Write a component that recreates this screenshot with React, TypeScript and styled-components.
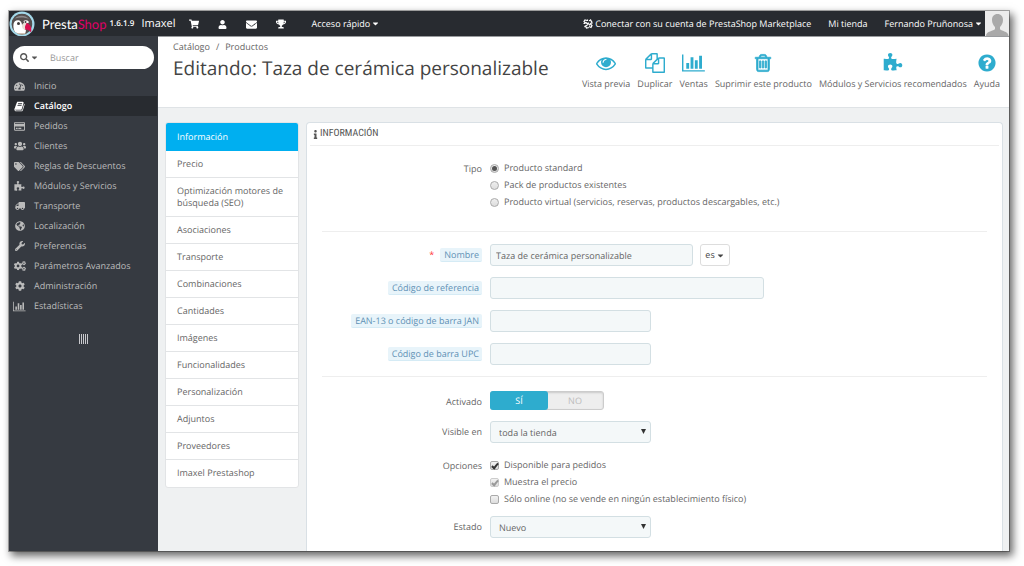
import React from "react";
import styled, { createGlobalStyle, css } from "styled-components";
import {
  FaCaretDown,
  FaCog,
  FaCogs,
  FaEnvelope,
  FaGlobeAmericas,
  FaInfo,
  FaRegCreditCard,
  FaSearch,
  FaShoppingCart,
  FaTachometerAlt,
  FaTags,
  FaTrophy,
  FaTruck,
  FaUser,
  FaUsers,
  FaWrench,
} from "react-icons/fa";

const GlobalStyle = createGlobalStyle`
  *, *::before, *::after { box-sizing: border-box; }
  body {
    margin: 0;
    background: #fff;
    color: #666;
    font-family: "Open Sans", "Noto Sans", sans-serif;
    font-size: 9px;
    line-height: 12px;
    text-rendering: geometricPrecision;
  }
  button, input, select { font: inherit; color: inherit; text-rendering: inherit; }
  a { color: inherit; text-decoration: none; }
  ul { list-style: none; margin: 0; padding: 0; }
  svg { display: block; flex: none; }
`;

/* ---------- Icons ---------- */

const EyeIcon = ({ size = 20 }) => (
  <svg width={size} height={size} viewBox="0 0 1792 1792" fill="currentColor" aria-hidden="true">
    <path d="M1664 960q-152-236-381-353 61 104 61 225 0 185-131.5 316.5t-316.5 131.5-316.5-131.5-131.5-316.5q0-121 61-225-229 117-381 353 133 205 333.5 326.5t434.5 121.5 434.5-121.5 333.5-326.5zm-720-384q0-20-14-34t-34-14q-125 0-214.5 89.5t-89.5 214.5q0 20 14 34t34 14 34-14 14-34q0-86 61-147t147-61q20 0 34-14t14-34zm848 384q0 34-20 69-140 230-376.5 368.5t-499.5 138.5-499.5-139-376.5-368q-20-35-20-69t20-69q140-229 376.5-368t499.5-139 499.5 139 376.5 368q20 35 20 69z" />
  </svg>
);

const FilesIcon = ({ size = 20 }) => (
  <svg width={size} height={size} viewBox="0 0 1792 1792" fill="currentColor" aria-hidden="true">
    <path d="M1696 384q40 0 68 28t28 68v1216q0 40-28 68t-68 28h-960q-40 0-68-28t-28-68v-288h-544q-40 0-68-28t-28-68v-672q0-40 20-88t48-76l408-408q28-28 76-48t88-20h416q40 0 68 28t28 68v328q68-40 128-40h416zm-544 213l-299 299h299v-299zm-640-384l-299 299h299v-299zm196 647l316-316v-416h-384v416q0 40-28 68t-68 28h-416v640h512v-256q0-40 20-88t48-76zm956 804v-1152h-384v416q0 40-28 68t-68 28h-416v640h896z" />
  </svg>
);

const ChartIcon = ({ size = 20 }) => (
  <svg width={(size * 8) / 7} height={size} viewBox="0 0 2048 1792" fill="currentColor" aria-hidden="true">
    <path d="M640 896v512h-256v-512h256zm384-512v1024h-256v-1024h256zm1024 1152v128h-2048v-1536h128v1408h1920zm-640-896v768h-256v-768h256zm384-384v1152h-256v-1152h256z" />
  </svg>
);

const TrashIcon = ({ size = 20 }) => (
  <svg width={size} height={size} viewBox="0 0 1792 1792" fill="currentColor" aria-hidden="true">
    <path
      stroke="currentColor"
      strokeWidth="70"
      d="M704 736v576q0 14-9 23t-23 9h-64q-14 0-23-9t-9-23v-576q0-14 9-23t23-9h64q14 0 23 9t9 23zm256 0v576q0 14-9 23t-23 9h-64q-14 0-23-9t-9-23v-576q0-14 9-23t23-9h64q14 0 23 9t9 23zm256 0v576q0 14-9 23t-23 9h-64q-14 0-23-9t-9-23v-576q0-14 9-23t23-9h64q14 0 23 9t9 23zm128 724v-948h-896v948q0 22 7 40.5t14.5 27 10.5 8.5h832q3 0 10.5-8.5t14.5-27 7-40.5zm-672-1076h448l-48-117q-7-9-17-11h-317q-10 2-17 11zm928 32v64q0 14-9 23t-23 9h-96v948q0 83-47 143.5t-113 60.5h-832q-66 0-113-58.5t-47-141.5v-952h-96q-14 0-23-9t-9-23v-64q0-14 9-23t23-9h309l70-167q15-37 54-63t79-26h320q40 0 79 26t54 63l70 167h309q14 0 23 9t9 23z"
    />
  </svg>
);

const PuzzleIcon = ({ size = 20 }) => (
  <svg width={size} height={size} viewBox="0 0 1792 1792" fill="currentColor" aria-hidden="true">
    <path d="M1728 1098q0 81-44.5 135t-123.5 54q-41 0-77.5-17.5t-59-38-56.5-38-71-17.5q-110 0-110 124 0 39 16 115t15 115v5q-22 0-33 1-34 3-97.5 11.5t-115.5 13.5-98 5q-61 0-103-26.5t-42-83.5q0-37 17.5-71t38-56.5 38-59 17.5-77.5q0-79-54-123.5t-135-44.5q-84 0-143 45.5t-59 127.5q0 43 15 83t33.5 64.5 33.5 53 15 50.5q0 45-46 89-37 35-117 35-95 0-245-24-9-2-27.5-4t-27.5-4l-13-2q-1 0-3-1-2 0-2-1v-1024q2 1 17.5 3.5t34 5 21.5 3.5q150 24 245 24 80 0 117-35 46-44 46-89 0-22-15-50.5t-33.5-53-33.5-64.5-15-83q0-82 59-127.5t144-45.5q80 0 134 44.5t54 123.5q0 41-17.5 77.5t-38 59-38 56.5-17.5 71q0 57 42 83.5t103 26.5q64 0 180-15t163-17v2q-1 2-3.5 17.5t-5 34-3.5 21.5q-24 150-24 245 0 80 35 117 44 46 89 46 22 0 50.5-15t53-33.5 64.5-33.5 83-15q82 0 127.5 59t45.5 143z" />
  </svg>
);

const HelpIcon = ({ size = 20 }) => (
  <svg width={size} height={size} viewBox="0 0 1792 1792" fill="currentColor" aria-hidden="true">
    <path d="M1024 1376v-192q0-14-9-23t-23-9h-192q-14 0-23 9t-9 23v192q0 14 9 23t23 9h192q14 0 23-9t9-23zm256-672q0-88-55.5-163t-138.5-116-170-41q-243 0-371 213-15 24 8 42l132 100q7 6 19 6 16 0 25-12 53-68 86-92 34-24 86-24 48 0 85.5 26t37.5 59q0 38-20 61t-68 45q-63 28-115.5 86.5t-52.5 125.5v36q0 14 9 23t23 9h192q14 0 23-9t9-23q0-19 21.5-49.5t54.5-49.5q32-18 49-28.5t46-35 44.5-48 28-60.5 12.5-81zm384 192q0 209-103 385.5t-279.5 279.5-385.5 103-385.5-103-279.5-279.5-103-385.5 103-385.5 279.5-279.5 385.5-103 385.5 103 279.5 279.5 103 385.5z" />
  </svg>
);

const BookIcon = ({ size = 11 }) => (
  <svg width={size} height={size} viewBox="0 0 1792 1792" fill="currentColor" aria-hidden="true">
    <path d="M1703 478q40 57 18 129l-275 906q-19 64-76.5 107.5t-122.5 43.5h-923q-77 0-148.5-53.5t-99.5-131.5q-24-67-2-127 0-4 3-27t4-37q1-8-3-21.5t-3-19.5q2-11 8-21t16.5-23.5 16.5-23.5q23-38 45-91.5t30-91.5q3-10 .5-30t-.5-28q3-11 17-28t17-23q21-36 42-92t25-90q1-9-2.5-32t.5-28q4-13 22-30.5t22-22.5q19-26 42.5-84.5t27.5-96.5q1-8-3-25.5t-2-26.5q2-8 9-18t18-23 17-21q8-12 16.5-30.5t15-35 16-36 19.5-32 26.5-23.5 36-11.5 47.5 5.5l-1 3q38-9 51-9h761q74 0 114 56t18 130l-274 906q-36 119-71.5 153.5t-128.5 34.5h-869q-27 0-38 15-11 16-1 43 24 70 144 70h923q29 0 56-15.5t35-41.5l300-987q7-22 5-57 38 15 59 43zm-1064 2q-4 13 2 22.5t20 9.5h608q13 0 25.5-9.5t16.5-22.5l21-64q4-13-2-22.5t-20-9.5h-608q-13 0-25.5 9.5t-16.5 22.5zm-83 256q-4 13 2 22.5t20 9.5h608q13 0 25.5-9.5t16.5-22.5l21-64q4-13-2-22.5t-20-9.5h-608q-13 0-25.5 9.5t-16.5 22.5z" />
  </svg>
);

const LinkIcon = () => (
  <svg width="10" height="10" viewBox="0 0 20 20" fill="none" stroke="currentColor" strokeWidth="2.4" aria-hidden="true">
    <path d="M8 3 4 2 2 5l3 4M5 6l4 4 2-3M9 12l-4 2 2 4 5-1M12 3l5 1 1 4-4 1M14 9l4 4-2 4-4-2M11 9l3 4" />
    <path d="M1 9h3M9 1v3M16 1l-2 2M3 16l2-2" />
  </svg>
);

const PuffinLogo = () => (
  <svg width="26" height="26" viewBox="0 0 52 52" aria-hidden="true">
    <defs>
      <clipPath id="puffin-disc">
        <circle cx="26" cy="26" r="21" />
      </clipPath>
    </defs>
    <circle cx="26" cy="26" r="25" fill="#a4d9ea" />
    <g clipPath="url(#puffin-disc)">
      <path d="M4 28C5 12 14 4 27 5c13 1 19 10 20 21l-6 24H8z" fill="#55504f" />
      <path d="M12 15c6-7 20-8 28 1-9-4-19-4-28-1z" fill="#8d8b8c" />
      <path d="M9 26c1-6 6-9 12-7 4 2 5 6 5 10l8 10-2 8H14c-4-7-6-14-5-21z" fill="#fff" />
      <path d="M29 20c4-3 10-2 11 3l-9 3z" fill="#fff" />
      <path d="M14 45h22l2 7H12z" fill="#9b8166" />
    </g>
    <path d="M33 24c4-1 8 2 10 6 2 5 2 9 1 13-3-5-8-7-13-6z" fill="#d8104f" />
    <path d="M26 28c2-5 7-6 9-3-3 4-4 8-2 12-4 1-8-3-7-9z" fill="#e8e0d6" />
    <circle cx="19" cy="25" r="3" fill="#3d3a3a" />
    <circle cx="33" cy="22" r="2" fill="#3d3a3a" />
  </svg>
);

const AvatarPicture = () => (
  <svg width="24" height="25" viewBox="0 0 48 50" role="img" aria-label="Fernando Pruñonosa">
    <rect width="48" height="50" fill="#ececec" />
    <path
      d="M25 6c7 0 11 5 11 12 0 6-3 11-6 14v4c1 4 17 4 17 14H2c0-10 16-10 18-14v-4c-3-3-6-8-6-14 0-7 4-12 11-12z"
      fill="#a9a9a9"
    />
  </svg>
);

/* ---------- Frame ---------- */

const Page = styled.div`
  display: flex;
  min-height: 100vh;
  padding: 11px 15px 15px 9px;
`;

const Window = styled.div`
  display: flex;
  flex-direction: column;
  flex: 1;
  min-width: 0;
  background: #eff1f2;
  box-shadow: 0 0 0 1px rgba(0, 0, 0, 0.3), 3px 4px 8px 1px rgba(0, 0, 0, 0.6);
`;

const TopBar = styled.header`
  display: flex;
  align-items: center;
  height: 25px;
  background: #282b30;
  color: #fff;
`;

const Brand = styled.a`
  display: flex;
  align-items: center;
  height: 25px;
`;

const BrandName = styled.span`
  margin-left: 7px;
  font-family: Lato, "Open Sans", sans-serif;
  font-size: 13px;
  line-height: 16px;
  b {
    font-weight: 400;
    color: #df0067;
  }
`;

const Version = styled.span`
  margin-left: 3px;
  font-size: 8px;
  font-weight: 600;
`;

const ShopName = styled.a`
  margin-left: 7px;
  font-size: 11px;
  line-height: 16px;
`;

const QuickIcons = styled.nav`
  display: flex;
  align-items: center;
  gap: 19px;
  margin-left: 14px;
  a {
    display: flex;
    padding-top: 1px;
  }
`;

const BarButton = styled.button`
  display: flex;
  align-items: center;
  gap: 1px;
  padding: 0;
  border: 0;
  background: none;
  color: #fff;
  white-space: nowrap;
`;

const BarRight = styled.div`
  display: flex;
  align-items: center;
  gap: 17px;
  margin-left: auto;
  white-space: nowrap;
`;

const BarLink = styled.a`
  display: flex;
  align-items: center;
  gap: 2px;
`;

const UserBox = styled.div`
  display: flex;
  align-items: center;
  gap: 2px;
`;

const QuickMenu = styled.div`
  margin-left: 25px;
`;

const Body = styled.div`
  display: flex;
  flex: 1;
`;

/* ---------- Sidebar ---------- */

const Sidebar = styled.aside`
  flex: none;
  width: 149px;
  background: #363a41;
  color: #bbb;
`;

const SearchBox = styled.form`
  display: flex;
  align-items: center;
  height: 23px;
  margin: 10px 4px 7px;
  padding: 0 8px 0 7px;
  border-radius: 12px;
  background: #fff;
`;

const SearchScope = styled.button`
  display: flex;
  align-items: center;
  gap: 1px;
  padding: 0;
  border: 0;
  background: none;
  color: #555;
`;

const SearchInput = styled.input`
  flex: 1;
  min-width: 0;
  margin-left: 11px;
  padding: 0;
  border: 0;
  outline: 0;
  background: none;
  &::placeholder {
    color: #999;
    opacity: 1;
  }
`;

const MenuLink = styled.a<{ $active?: boolean }>`
  display: flex;
  align-items: center;
  height: 20px;
  ${(p) =>
    p.$active &&
    css`
      margin-right: 1px;
      background: #282b30;
      color: #fff;
      font-weight: 600;
    `}
`;

const MenuIcon = styled.span<{ $flip?: boolean }>`
  display: flex;
  justify-content: center;
  width: 21px;
  margin-right: 4px;
  svg {
    transform: ${(p) => (p.$flip ? "scaleX(-1)" : "none")};
  }
`;

const Collapse = styled.button`
  display: flex;
  gap: 1px;
  margin: 18px auto;
  padding: 0;
  border: 0;
  background: none;
  i {
    width: 1px;
    height: 10px;
    background: #c8c8cc;
  }
`;

/* ---------- Main ---------- */

const Main = styled.main`
  display: flex;
  flex-direction: column;
  flex: 1;
  min-width: 0;
`;

const PageHead = styled.div`
  display: flex;
  justify-content: space-between;
  height: 72px;
  padding: 5px 9px 0 15px;
  border-bottom: 1px solid #dfe3e6;
  border-top: 1px solid #999b9e;
  background: #fff;
`;

const Crumbs = styled.nav`
  display: flex;
  gap: 6px;
  line-height: 10px;
`;

const Title = styled.h1`
  margin: 4px 0 0;
  color: #444;
  font-size: 19px;
  font-weight: 400;
  line-height: 24px;
  white-space: nowrap;
`;

const Toolbar = styled.ul`
  display: flex;
  gap: 7px;
  padding-top: 11px;
`;

const ToolLink = styled.a`
  display: flex;
  flex-direction: column;
  align-items: center;
  gap: 5px;
  white-space: nowrap;
  svg {
    color: #2eacce;
  }
`;

const Columns = styled.div`
  display: flex;
  flex: 1;
  gap: 7px;
  padding: 14px 6px 0 7px;
`;

const Tabs = styled.ul`
  align-self: flex-start;
  flex: none;
  width: 134px;
  border: 1px solid #e2e4e6;
  border-radius: 3px;
  overflow: hidden;
  background: #fff;
`;

const TabLink = styled.a<{ $active?: boolean }>`
  display: block;
  padding: 7px 11px;
  border-bottom: 1px solid #e2e4e6;
  li:last-child > & {
    border-bottom: 0;
    padding-bottom: 8px;
  }
  ${(p) =>
    p.$active &&
    css`
      padding-top: 8px;
      border-color: #00aff0;
      background: #00aff0;
      color: #fff;
    `}
`;

const Panel = styled.form`
  flex: 1;
  min-width: 0;
  padding: 0 3px;
  border: 1px solid #d9e0e5;
  border-bottom: 0;
  border-radius: 4px 4px 0 0;
  background: #fff;
`;

const PanelTitle = styled.h2`
  display: flex;
  align-items: center;
  height: 23px;
  margin: 0;
  padding-left: 1px;
  border-bottom: 1px solid #eee;
  color: #555;
  font-family: "Roboto Condensed", Roboto, "Open Sans", sans-serif;
  font-size: 10px;
  font-weight: 400;
  text-transform: uppercase;
`;

const Section = styled.section<{ $top?: number; $bottom?: number }>`
  margin: 0 12px;
  padding: ${(p) => p.$top ?? 12}px 0 ${(p) => p.$bottom ?? 11}px;
  &:not(:last-child) {
    border-bottom: 1px solid #eee;
  }
`;

const Row = styled.div<{ $gap?: number }>`
  display: grid;
  grid-template-columns: minmax(100px, 160px) 1fr;
  column-gap: 8px;
  &:not(:first-child) {
    margin-top: ${(p) => p.$gap ?? 11}px;
  }
`;

const LabelCell = styled.div<{ $top?: number }>`
  display: flex;
  justify-content: flex-end;
  align-items: flex-start;
  gap: 6px;
  padding-top: ${(p) => p.$top ?? 4}px;
  line-height: 13px;
  white-space: nowrap;
`;

const HintLabel = styled.label`
  padding: 0 3px 0 4px;
  border-bottom: 1px solid #d5ebf5;
  border-radius: 2px;
  background: #e8f4fa;
  color: #5f91b5;
`;

const Required = styled.span`
  color: #f33;
`;

const Controls = styled.div`
  display: flex;
  align-items: flex-start;
  gap: 7px;
`;

const fieldBox = css`
  height: 22px;
  max-width: 100%;
  border: 1px solid #d3dfe3;
  border-radius: 3px;
  background: #f4f8f9;
  color: #666;
`;

const TextField = styled.input<{ $width: number }>`
  ${fieldBox}
  width: ${(p) => p.$width}px;
  padding: 0 5px;
`;

const SelectWrap = styled.div`
  position: relative;
  width: 161px;
  svg {
    position: absolute;
    top: 8px;
    right: 5px;
    pointer-events: none;
  }
`;

const SelectField = styled.select`
  ${fieldBox}
  display: block;
  appearance: none;
  width: 100%;
  padding: 2px 8px 0;
`;

const LangButton = styled.button`
  display: flex;
  align-items: center;
  justify-content: center;
  gap: 1px;
  width: 30px;
  height: 22px;
  padding: 0;
  border: 1px solid #ddd;
  border-radius: 3px;
  background: #fff;
  color: #444;
`;

const Choices = styled.div`
  display: flex;
  flex-direction: column;
  gap: 5px;
`;

const Choice = styled.label`
  display: flex;
  align-items: center;
  gap: 5px;
`;

const Radio = styled.input`
  appearance: none;
  display: grid;
  place-items: center;
  flex: none;
  width: 9px;
  height: 9px;
  margin: 0;
  border: 1px solid #aaa;
  border-radius: 50%;
  background: linear-gradient(#eee, #ddd);
  &:checked::after {
    content: "";
    width: 5px;
    height: 5px;
    border-radius: 50%;
    background: #555;
  }
`;

const Check = styled.input`
  appearance: none;
  display: grid;
  place-items: center;
  flex: none;
  width: 9px;
  height: 9px;
  margin: 0;
  border: 1px solid #aaa;
  border-radius: 2px;
  background: linear-gradient(#f2f2f2, #ddd);
  &:checked::after {
    content: "";
    width: 4px;
    height: 7px;
    border: solid #333;
    border-width: 0 2px 2px 0;
    transform: rotate(40deg);
  }
  &:disabled {
    border-color: #ccc;
  }
  &:disabled::after {
    border-color: #999;
  }
`;

const Switch = styled.div`
  display: flex;
  width: 114px;
  height: 19px;
  border: 1px solid #ccc;
  border-radius: 3px;
  background: #eee;
  box-shadow: inset 0 1px 2px rgba(0, 0, 0, 0.15);
`;

const SwitchButton = styled.button<{ $on?: boolean }>`
  flex: 1;
  margin: -1px;
  padding: 0;
  border: 0;
  border-radius: 3px;
  background: ${(p) => (p.$on ? "#2eacce" : "none")};
  color: ${(p) => (p.$on ? "#fff" : "#bbb")};
`;

/* ---------- Data ---------- */

const menu = [
  { label: "Inicio", icon: <FaTachometerAlt size={11} /> },
  { label: "Catálogo", icon: <BookIcon />, active: true },
  { label: "Pedidos", icon: <FaRegCreditCard size={11} /> },
  { label: "Clientes", icon: <FaUsers size={12} /> },
  { label: "Reglas de Descuentos", icon: <FaTags size={11} /> },
  { label: "Módulos y Servicios", icon: <PuzzleIcon size={11} /> },
  { label: "Transporte", icon: <FaTruck size={10} />, flip: true },
  { label: "Localización", icon: <FaGlobeAmericas size={10} /> },
  { label: "Preferencias", icon: <FaWrench size={10} /> },
  { label: "Parámetros Avanzados", icon: <FaCogs size={12} /> },
  { label: "Administración", icon: <FaCog size={10} /> },
  { label: "Estadísticas", icon: <ChartIcon size={11} /> },
];

const tools = [
  { label: "Vista previa", icon: <EyeIcon /> },
  { label: "Duplicar", icon: <FilesIcon /> },
  { label: "Ventas", icon: <ChartIcon /> },
  { label: "Suprimir este producto", icon: <TrashIcon /> },
  { label: "Módulos y Servicios recomendados", icon: <PuzzleIcon /> },
  { label: "Ayuda", icon: <HelpIcon /> },
];

const tabs = [
  "Información",
  "Precio",
  "Optimización motores de búsqueda (SEO)",
  "Asociaciones",
  "Transporte",
  "Combinaciones",
  "Cantidades",
  "Imágenes",
  "Funcionalidades",
  "Personalización",
  "Adjuntos",
  "Proveedores",
  "Imaxel Prestashop",
];

const productTypes = [
  "Producto standard",
  "Pack de productos existentes",
  "Producto virtual (servicios, reservas, productos descargables, etc.)",
];

const codes = [
  { id: "reference", label: "Código de referencia", width: 274 },
  { id: "ean13", label: "EAN-13 o código de barra JAN", width: 161 },
  { id: "upc", label: "Código de barra UPC", width: 161 },
];

const Dropdown = ({ id, value }: { id: string; value: string }) => (
  <SelectWrap>
    <SelectField id={id} defaultValue={value}>
      <option>{value}</option>
    </SelectField>
    <svg width="5" height="5" viewBox="0 0 5 5" aria-hidden="true">
      <path d="M0 0h5L2.5 5z" fill="#333" />
    </svg>
  </SelectWrap>
);

export default function App() {
  return (
    <Page>
      <GlobalStyle />
      <Window>
        <TopBar>
          <Brand href="#">
            <PuffinLogo />
            <BrandName>
              Presta<b>Shop</b>
            </BrandName>
            <Version>1.6.1.9</Version>
          </Brand>
          <ShopName href="#">Imaxel</ShopName>
          <QuickIcons>
            <a href="#" aria-label="Pedidos"><FaShoppingCart size={10} /></a>
            <a href="#" aria-label="Clientes"><FaUser size={9} /></a>
            <a href="#" aria-label="Mensajes"><FaEnvelope size={11} /></a>
            <a href="#" aria-label="Logros"><FaTrophy size={10} /></a>
          </QuickIcons>
          <QuickMenu>
            <BarButton type="button">
              Acceso rápido <FaCaretDown size={9} />
            </BarButton>
          </QuickMenu>
          <BarRight>
            <BarLink href="#">
              <LinkIcon />
              Conectar con su cuenta de PrestaShop Marketplace
            </BarLink>
            <BarLink href="#">Mi tienda</BarLink>
            <UserBox>
              <BarButton type="button">
                Fernando Pruñonosa <FaCaretDown size={9} />
              </BarButton>
              <AvatarPicture />
            </UserBox>
          </BarRight>
        </TopBar>

        <Body>
          <Sidebar>
            <SearchBox>
              <SearchScope type="button" aria-label="Ámbito de búsqueda">
                <FaSearch size={9} />
                <FaCaretDown size={9} />
              </SearchScope>
              <SearchInput type="text" placeholder="Buscar" aria-label="Buscar" />
            </SearchBox>
            <nav>
              <ul>
                {menu.map((item) => (
                  <li key={item.label}>
                    <MenuLink href="#" $active={item.active}>
                      <MenuIcon $flip={item.flip}>{item.icon}</MenuIcon>
                      {item.label}
                    </MenuLink>
                  </li>
                ))}
              </ul>
            </nav>
            <Collapse type="button" aria-label="Contraer menú">
              <i />
              <i />
              <i />
              <i />
              <i />
            </Collapse>
          </Sidebar>

          <Main>
            <PageHead>
              <div>
                <Crumbs>
                  <a href="#">Catálogo</a>
                  <span>/</span>
                  <a href="#">Productos</a>
                </Crumbs>
                <Title>Editando: Taza de cerámica personalizable</Title>
              </div>
              <Toolbar>
                {tools.map((tool) => (
                  <li key={tool.label}>
                    <ToolLink href="#">
                      {tool.icon}
                      {tool.label}
                    </ToolLink>
                  </li>
                ))}
              </Toolbar>
            </PageHead>

            <Columns>
              <Tabs>
                {tabs.map((tab, i) => (
                  <li key={tab}>
                    <TabLink href="#" $active={i === 0}>
                      {tab}
                    </TabLink>
                  </li>
                ))}
              </Tabs>

              <Panel>
                <PanelTitle>
                  <FaInfo size={9} />
                  Información
                </PanelTitle>

                <Section $top={16} $bottom={23}>
                  <Row role="radiogroup" aria-labelledby="type-label">
                    <LabelCell $top={0}>
                      <span id="type-label">Tipo</span>
                    </LabelCell>
                    <Choices>
                      {productTypes.map((type, i) => (
                        <Choice key={type}>
                          <Radio type="radio" name="type" defaultChecked={i === 0} />
                          {type}
                        </Choice>
                      ))}
                    </Choices>
                  </Row>
                </Section>

                <Section>
                  <Row>
                    <LabelCell>
                      <Required>*</Required>
                      <HintLabel htmlFor="name">Nombre</HintLabel>
                    </LabelCell>
                    <Controls>
                      <TextField
                        id="name"
                        type="text"
                        $width={203}
                        defaultValue="Taza de cerámica personalizable"
                      />
                      <LangButton type="button">
                        es <FaCaretDown size={9} />
                      </LangButton>
                    </Controls>
                  </Row>
                  {codes.map((code) => (
                    <Row key={code.id}>
                      <LabelCell>
                        <HintLabel htmlFor={code.id}>{code.label}</HintLabel>
                      </LabelCell>
                      <Controls>
                        <TextField id={code.id} type="text" $width={code.width} />
                      </Controls>
                    </Row>
                  ))}
                </Section>

                <Section $top={14}>
                  <Row>
                    <LabelCell>
                      <span id="active-label">Activado</span>
                    </LabelCell>
                    <Switch role="group" aria-labelledby="active-label">
                      <SwitchButton type="button" $on aria-pressed="true">
                        SÍ
                      </SwitchButton>
                      <SwitchButton type="button" aria-pressed="false">
                        NO
                      </SwitchButton>
                    </Switch>
                  </Row>
                  <Row>
                    <LabelCell>
                      <label htmlFor="visibility">Visible en</label>
                    </LabelCell>
                    <Dropdown id="visibility" value="toda la tienda" />
                  </Row>
                  <Row $gap={16} role="group" aria-labelledby="options-label">
                    <LabelCell $top={0}>
                      <span id="options-label">Opciones</span>
                    </LabelCell>
                    <Choices>
                      <Choice>
                        <Check type="checkbox" defaultChecked />
                        Disponible para pedidos
                      </Choice>
                      <Choice>
                        <Check type="checkbox" defaultChecked disabled />
                        Muestra el precio
                      </Choice>
                      <Choice>
                        <Check type="checkbox" />
                        Sólo online (no se vende en ningún establecimiento físico)
                      </Choice>
                    </Choices>
                  </Row>
                  <Row>
                    <LabelCell>
                      <label htmlFor="condition">Estado</label>
                    </LabelCell>
                    <Dropdown id="condition" value="Nuevo" />
                  </Row>
                </Section>
              </Panel>
            </Columns>
          </Main>
        </Body>
      </Window>
    </Page>
  );
}
